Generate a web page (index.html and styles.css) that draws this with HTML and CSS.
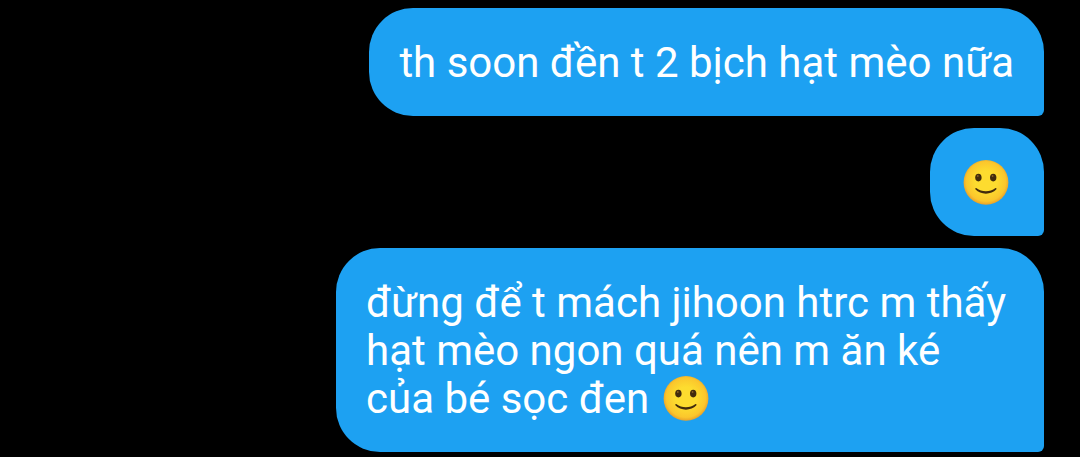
FILE: index.html
```html
<!DOCTYPE html>
<html lang="vi">
<head>
    <meta charset="UTF-8">
    <meta name="viewport" content="width=device-width, initial-scale=1.0">
    <title>Messages</title>
    <link rel="stylesheet" href="styles.css">
</head>
<body>
    <!-- Shared smiley -->
    <svg class="defs" width="0" height="0" aria-hidden="true">
        <defs>
            <radialGradient id="face" cx="50%" cy="48%" r="52%">
                <stop offset="45%" stop-color="#fddc2f"/>
                <stop offset="85%" stop-color="#fbc62c"/>
                <stop offset="100%" stop-color="#e9a02a"/>
            </radialGradient>
        </defs>
        <symbol id="smile" viewBox="0 0 48 48">
            <circle cx="24" cy="23.4" r="22.4" fill="url(#face)"/>
            <ellipse cx="16.4" cy="18.6" rx="3.2" ry="3.8" fill="#422b0d"/>
            <ellipse cx="31.2" cy="18.6" rx="3.2" ry="3.8" fill="#422b0d"/>
            <circle cx="15.8" cy="17" r="0.9" fill="#896024"/>
            <circle cx="30.6" cy="17" r="0.9" fill="#896024"/>
            <path d="M14.6 29.2 C19.5 33.2 28.3 33.2 33.2 29.2 C34.2 28.5 35 29.4 34.2 30.5 C29.5 36 18.3 36 13.6 30.5 C12.8 29.4 13.6 28.5 14.6 29.2 Z" fill="#422b0d"/>
        </symbol>
    </svg>

    <main class="chat">
        <p class="message">th soon đền t 2 bịch hạt mèo nữa</p>
        <p class="message"><svg class="emoji" role="img" aria-label="🙂"><use href="#smile"/></svg></p>
        <p class="message">đừng để t mách jihoon htrc m thấy hạt mèo ngon quá nên m ăn ké của bé sọc đen <svg class="emoji" role="img" aria-label="🙂"><use href="#smile"/></svg></p>
    </main>
</body>
</html>
```
FILE: styles.css
```css
body {
    margin: 0;
    background-color: #000;
    font-family: Roboto, "Noto Sans", sans-serif;
}

.defs {
    display: block;
}

.chat {
    display: flex;
    flex-direction: column;
    align-items: flex-end;
    gap: 12px;
    padding: 8px 36px 5px;
}

.message {
    box-sizing: border-box;
    max-width: 708px;
    margin: 0;
    padding: 31px 30px 29px;
    border-radius: 44px 44px 6px 44px;
    background-color: #1da1f2;
    color: #fff;
    font-size: 42px;
    line-height: 48px;
}

.emoji {
    width: 48px;
    height: 48px;
    margin: 0 4px 0 2px;
    vertical-align: top;
}
```
